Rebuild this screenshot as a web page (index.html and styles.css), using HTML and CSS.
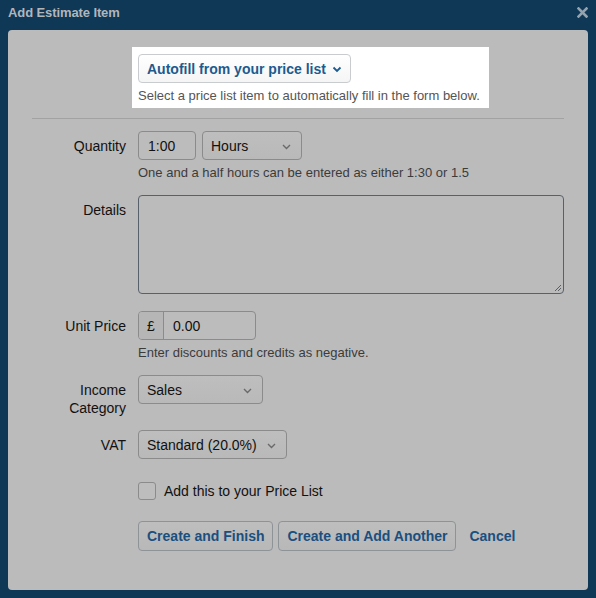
FILE: index.html
```html
<!DOCTYPE html>
<html lang="en">
<head>
<meta charset="utf-8">
<title>Add Estimate Item</title>
<link rel="stylesheet" href="styles.css">
</head>
<body>
<div class="modal">
  <div class="modal-header">
    <h1 class="modal-title">Add Estimate Item</h1>
    <button class="close" type="button" aria-label="Close">
      <svg width="11" height="11" viewBox="0 0 11 11"><path d="M1.5 1.5 L9.5 9.5 M9.5 1.5 L1.5 9.5" stroke="#97a2ad" stroke-width="2.6" stroke-linecap="square"/></svg>
    </button>
  </div>
  <div class="modal-body">
    <div class="autofill">
      <button class="btn btn-autofill" type="button"><span>Autofill from your price list</span>
        <svg class="caret" width="10" height="7" viewBox="0 0 10 7"><path d="M1.5 1.5 L5 5 L8.5 1.5" fill="none" stroke="#1d5b8f" stroke-width="1.8"/></svg>
      </button>
      <p class="autofill-help">Select a price list item to automatically fill in the form below.</p>
    </div>
    <hr class="rule">
    <form class="form">
      <div class="row">
        <label class="label">Quantity</label>
        <div class="field">
          <div class="controls">
            <div class="input w-qty">1:00</div>
            <div class="select w-hours">Hours<svg class="chev" width="9" height="6" viewBox="0 0 9 6"><path d="M1 1 L4.5 4.5 L8 1" fill="none" stroke="#6a6a6a" stroke-width="1.4"/></svg></div>
          </div>
          <p class="help">One and a half hours can be entered as either 1:30 or 1.5</p>
        </div>
      </div>
      <div class="row">
        <label class="label">Details</label>
        <div class="field">
          <div class="textarea">
            <svg class="grip" width="9" height="9" viewBox="0 0 9 9"><path d="M8 2 L2 8 M8 5 L5 8" stroke="#5a5f64" stroke-width="1"/></svg>
          </div>
        </div>
      </div>
      <div class="row">
        <label class="label">Unit Price</label>
        <div class="field">
          <div class="input-group">
            <span class="addon">£</span>
            <span class="group-value">0.00</span>
          </div>
          <p class="help">Enter discounts and credits as negative.</p>
        </div>
      </div>
      <div class="row">
        <label class="label">Income Category</label>
        <div class="field">
          <div class="select w-sales">Sales<svg class="chev" width="9" height="6" viewBox="0 0 9 6"><path d="M1 1 L4.5 4.5 L8 1" fill="none" stroke="#6a6a6a" stroke-width="1.4"/></svg></div>
        </div>
      </div>
      <div class="row">
        <label class="label">VAT</label>
        <div class="field">
          <div class="select w-vat">Standard (20.0%)<svg class="chev" width="9" height="6" viewBox="0 0 9 6"><path d="M1 1 L4.5 4.5 L8 1" fill="none" stroke="#6a6a6a" stroke-width="1.4"/></svg></div>
        </div>
      </div>
      <div class="row row-check">
        <span class="label"></span>
        <div class="field check">
          <span class="checkbox"></span>
          <span class="check-text">Add this to your Price List</span>
        </div>
      </div>
      <div class="row row-actions">
        <span class="label"></span>
        <div class="field actions">
          <button class="btn btn-action" type="button">Create and Finish</button>
          <button class="btn btn-action" type="button">Create and Add Another</button>
          <a class="cancel" href="#">Cancel</a>
        </div>
      </div>
    </form>
  </div>
</div>
</body>
</html>
```

FILE: styles.css
```css
* { box-sizing: border-box; }
html, body { margin: 0; padding: 0; }
body {
  background: #0f3756;
  font-family: "Liberation Sans", Arial, sans-serif;
  font-size: 14px;
  color: #111;
  width: 596px;
  height: 598px;
  overflow: hidden;
}
.modal-header {
  height: 24px;
  display: flex;
  align-items: center;
  justify-content: space-between;
  padding: 0 8px 0 8px;
  margin-bottom: 6px;
}
.modal-title {
  margin: 0;
  font-size: 13px;
  font-weight: bold;
  color: #b1b6bb;
  letter-spacing: -0.1px;
}
.close {
  border: 0;
  background: none;
  padding: 0;
  margin: 0;
  width: 11px;
  height: 11px;
  display: flex;
}
.modal-body {
  margin: 0 8px;
  height: 560px;
  background: #bbbbbb;
  border-radius: 4px;
  padding: 17px 24px 0;
}
.autofill {
  margin-left: 100px;
  width: 357px;
  background: #fff;
  padding: 7px 6px 3px;
}
.btn {
  font-family: "Liberation Sans", Arial, sans-serif;
  font-weight: bold;
  font-size: 14px;
  border-radius: 4px;
  margin: 0;
  white-space: nowrap;
}
.btn-autofill {
  height: 29px;
  display: inline-flex;
  align-items: center;
  gap: 6px;
  padding: 0 8px;
  color: #1d5b8f;
  background: linear-gradient(#ffffff, #f5f5f5);
  border: 1px solid #c9cccf;
  vertical-align: top;
}
.caret { margin-top: 1px; }
.autofill-help {
  margin: 4px 0 0;
  line-height: 18px;
  font-size: 13px;
  color: #555;
}
.rule {
  border: 0;
  border-top: 1px solid #a2a2a2;
  margin: 10px 0 12px;
  height: 0;
}
.form { margin: 0; }
.row {
  display: grid;
  grid-template-columns: 94px 1fr;
  column-gap: 12px;
  margin-bottom: 13px;
}
.label {
  text-align: right;
  padding-top: 6px;
  line-height: 18px;
  color: #111;
}
.controls { display: flex; gap: 6px; }
.input, .select, .input-group {
  height: 29px;
  border: 1px solid #8b8b8b;
  border-radius: 4px;
  background: #bcbcbc;
  display: flex;
  align-items: center;
  color: #111;
}
.input { padding: 0 9px; }
.select {
  padding: 0 0 0 8px;
  position: relative;
  background: linear-gradient(#bebebe, #b9b9b9);
}
.chev { position: absolute; right: 10px; top: 12px; }
.w-qty { width: 58px; }
.w-hours { width: 100px; }
.w-sales { width: 125px; }
.w-vat { width: 149px; }
.help {
  margin: 4px 0 0;
  font-size: 13px;
  line-height: 18px;
  color: #3b3b3b;
}
.textarea {
  width: 426px;
  height: 99px;
  border: 1px solid #58616a;
  border-radius: 4px;
  background: #bbbbbb;
  position: relative;
  margin-bottom: 4px;
}
.grip { position: absolute; right: 1px; bottom: 1px; }
.input-group { width: 118px; }
.addon {
  width: 25px;
  height: 100%;
  border-right: 1px solid #8b8b8b;
  background: #b6b6b6;
  border-radius: 3px 0 0 3px;
  display: flex;
  align-items: center;
  justify-content: center;
}
.group-value { padding-left: 9px; }
.row-check { margin-bottom: 21px; }
.check {
  display: flex;
  align-items: center;
  gap: 8px;
  margin-top: 10px;
  height: 18px;
}
.checkbox {
  width: 18px;
  height: 18px;
  border: 1px solid #8b8b8b;
  border-radius: 3px;
  background: #bdbdbd;
}
.check-text { color: #111; }
.actions { display: flex; align-items: center; }
.btn-action {
  height: 30px;
  padding: 0 8px;
  color: #1a4f7f;
  background: linear-gradient(#bebebe, #b8b8b8);
  border: 1px solid #8e9398;
  margin-right: 5px;
}
.cancel {
  color: #1a4f7f;
  font-weight: bold;
  text-decoration: none;
  padding-left: 8px;
}
```
